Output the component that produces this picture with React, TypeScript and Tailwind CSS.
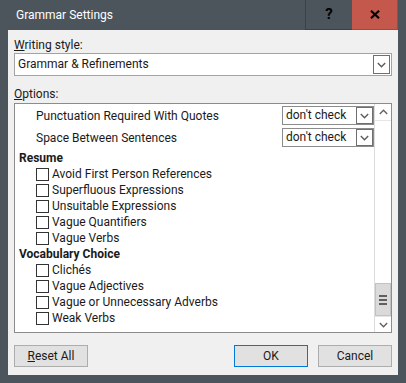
import React from "react";

// ==================== Small drawings ====================

function Chevron({ up = false, color = "#5a5a5a" }: { up?: boolean; color?: string }) {
    return (
        <svg width="9" height="6" viewBox="0 0 9 6" className="block">
            <path
                d={up ? "M0.8 5 L4.5 1.2 L8.2 5" : "M0.8 1 L4.5 4.8 L8.2 1"}
                fill="none"
                stroke={color}
                strokeWidth="1.3"
            />
        </svg>
    );
}

function DropArrow() {
    return (
        <div className="w-[17px] self-stretch bg-white border border-[#6f6f6f] flex items-center justify-center">
            <Chevron />
        </div>
    );
}

function Checkbox() {
    return <div className="w-[13px] h-[13px] bg-white border border-[#333333] shrink-0" />;
}

// ==================== Data ====================

type Row =
    | { kind: "select"; label: string; value: string }
    | { kind: "heading"; label: string }
    | { kind: "check"; label: string };

const rows: Row[] = [
    { kind: "select", label: "Punctuation Required With Quotes", value: "don't check" },
    { kind: "select", label: "Space Between Sentences", value: "don't check" },
    { kind: "heading", label: "Resume" },
    { kind: "check", label: "Avoid First Person References" },
    { kind: "check", label: "Superfluous Expressions" },
    { kind: "check", label: "Unsuitable Expressions" },
    { kind: "check", label: "Vague Quantifiers" },
    { kind: "check", label: "Vague Verbs" },
    { kind: "heading", label: "Vocabulary Choice" },
    { kind: "check", label: "Clichés" },
    { kind: "check", label: "Vague Adjectives" },
    { kind: "check", label: "Vague or Unnecessary Adverbs" },
    { kind: "check", label: "Weak Verbs" },
];

// ==================== Component ====================

function OptionRow({ row }: { row: Row }) {
    if (row.kind === "select") {
        return (
            <div className="flex items-center h-[19px] mb-[3px] pl-[21px]">
                <span className="flex-1">{row.label}</span>
                <div className="w-[92px] h-[19px] flex bg-white border border-[#8c8c8c]">
                    <span className="flex-1 pl-[3px] leading-[17px]">{row.value}</span>
                    <DropArrow />
                </div>
            </div>
        );
    }
    if (row.kind === "heading") {
        return <div className="h-[16px] leading-[16px] pl-[4px] font-bold">{row.label}</div>;
    }
    return (
        <div className="flex items-center h-[16px] pl-[21px] gap-[3px]">
            <Checkbox />
            <span className="leading-[16px]">{row.label}</span>
        </div>
    );
}

function Button({ children, primary = false }: { children: React.ReactNode; primary?: boolean }) {
    return (
        <button
            className={
                primary
                    ? "w-[74px] h-[22px] bg-[#e1e1e1] border border-[#0078d7] text-[#1a1a1a]"
                    : "w-[74px] h-[22px] bg-[#e1e1e1] border border-[#adadad] text-[#1a1a1a]"
            }
        >
            {children}
        </button>
    );
}

export default function App() {
    return (
        <div
            className="w-[406px] h-[383px] bg-[#4b555b] flex flex-col text-[12px] text-[#1a1a1a]"
            style={{ fontFamily: 'Roboto, "Noto Sans", sans-serif' }}
        >
            {/* Title bar */}
            <div className="h-[30px] flex shrink-0 pr-[8px]">
                <div className="flex-1 pl-[16px] leading-[30px] text-white">Grammar Settings</div>
                <div className="w-[47px] border-l border-b border-[#3a4247] flex items-center justify-center font-bold text-[15px] text-black">
                    ?
                </div>
                <div className="w-[46px] bg-[#c4584c] border-b border-r border-[#a9463b] flex items-center justify-center">
                    <svg width="10" height="9" viewBox="0 0 10 9">
                        <path d="M1 0.8 L9 8.2 M9 0.8 L1 8.2" stroke="#000" strokeWidth="2.2" fill="none" />
                    </svg>
                </div>
            </div>

            {/* Body */}
            <div className="flex-1 mx-[8px] mb-[8px] bg-[#f0f0f0] px-[6px] pt-[7px] pb-[8px] flex flex-col">
                <div className="h-[16px] leading-[16px]">
                    <u>W</u>riting style:
                </div>
                <div className="h-[23px] flex bg-white border border-[#a3a3a3] p-[1px] pl-0">
                    <span className="flex-1 pl-[3px] leading-[19px]">Grammar &amp; Refinements</span>
                    <DropArrow />
                </div>

                <div className="h-[16px] leading-[16px] mt-[10px]">
                    <u>O</u>ptions:
                </div>
                <div className="mt-[1px] h-[230px] flex bg-white border border-[#8c8c8c]">
                    <div className="flex-1 pt-[2px]">
                        {rows.map((row) => (
                            <OptionRow key={row.label} row={row} />
                        ))}
                    </div>

                    {/* Scrollbar */}
                    <div className="w-[17px] flex flex-col border-l border-[#dcdcdc]">
                        <div className="h-[17px] flex items-center justify-center border-b border-[#e6e6e6]">
                            <Chevron up color="#606060" />
                        </div>
                        <div className="flex-1" />
                        <div className="h-[33px] bg-[#dadada] border border-[#c2c2c2] flex flex-col items-center justify-center gap-[2px]">
                            <div className="w-[8px] h-[2px] bg-[#5f5f5f]" />
                            <div className="w-[8px] h-[2px] bg-[#5f5f5f]" />
                            <div className="w-[8px] h-[2px] bg-[#5f5f5f]" />
                        </div>
                        <div className="h-[16px] flex items-center justify-center border-t border-[#e6e6e6]">
                            <Chevron color="#606060" />
                        </div>
                    </div>
                </div>

                <div className="mt-[12px] flex">
                    <Button>
                        <u>R</u>eset All
                    </Button>
                    <div className="flex-1" />
                    <Button primary>OK</Button>
                    <div className="w-[10px]" />
                    <Button>Cancel</Button>
                </div>
            </div>
        </div>
    );
}
